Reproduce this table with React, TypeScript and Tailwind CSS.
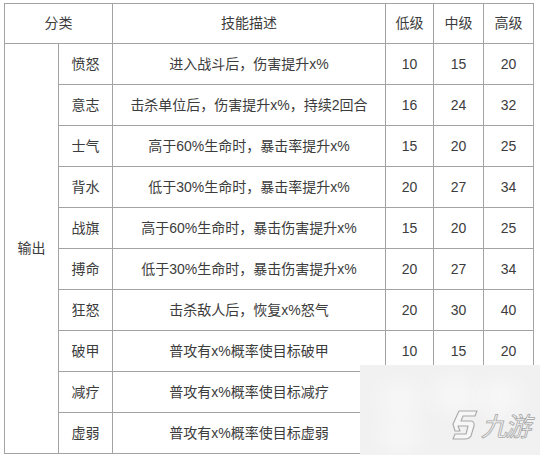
const rows = [
  { name: '愤怒', desc: '进入战斗后，伤害提升x%', v: ['10', '15', '20'] },
  { name: '意志', desc: '击杀单位后，伤害提升x%，持续2回合', v: ['16', '24', '32'] },
  { name: '士气', desc: '高于60%生命时，暴击率提升x%', v: ['15', '20', '25'] },
  { name: '背水', desc: '低于30%生命时，暴击率提升x%', v: ['20', '27', '34'] },
  { name: '战旗', desc: '高于60%生命时，暴击伤害提升x%', v: ['15', '20', '25'] },
  { name: '搏命', desc: '低于30%生命时，暴击伤害提升x%', v: ['20', '27', '34'] },
  { name: '狂怒', desc: '击杀敌人后，恢复x%怒气', v: ['20', '30', '40'] },
  { name: '破甲', desc: '普攻有x%概率使目标破甲', v: ['10', '15', '20'] },
  { name: '减疗', desc: '普攻有x%概率使目标减疗', v: ['', '', ''] },
  { name: '虚弱', desc: '普攻有x%概率使目标虚弱', v: ['', '', ''] },
];

const cell = 'border border-[#a3a3a3] text-center align-middle p-0';

function Watermark() {
  return (
    <div className="absolute left-[360px] top-[365px] w-[180px] h-[90px] bg-[#f1f1f1] overflow-hidden">
      <div className="absolute left-[20px] top-[20px] w-[40px] h-[30px] rounded-full bg-white/60 blur-md" />
      <div className="absolute left-[75px] top-[15px] w-[40px] h-[30px] rounded-full bg-white/60 blur-md" />
      <div className="absolute left-[120px] top-[18px] w-[40px] h-[30px] rounded-full bg-white/60 blur-md" />
      <div className="absolute left-[20px] top-[55px] w-[40px] h-[30px] rounded-full bg-white/60 blur-md" />
      <div className="absolute left-[89px] top-[44px] flex items-center gap-[2px]">
        <svg width="30" height="32" viewBox="0 0 30 32" fill="#f7f7f7" stroke="#a8a8a8" strokeWidth="1.1" strokeLinejoin="round">
          <path d="M10 2 L28 2 L26 7 L14 7 L12 12 L21 12 Q26 12 25 17 L22 27 Q20 30 16 30 L4 30 L6 25 L17 25 L19 17 L9 17 L11 22 L6 22 L4 15 Z" />
        </svg>
        <span
          className="text-[26px] leading-none italic text-[#f7f7f7] tracking-[-2px]"
          style={{ WebkitTextStroke: '0.8px #a8a8a8', fontFamily: '"Noto Sans CJK SC", sans-serif' }}
        >
          九游
        </span>
      </div>
    </div>
  );
}

export default function App() {
  return (
    <div
      className="relative w-[540px] h-[455px] bg-white overflow-hidden text-[14px] text-[#3c3c3c]"
      style={{ fontFamily: '"Liberation Sans", "Noto Sans CJK SC", sans-serif' }}
    >
      <div className="pl-[4px] pt-[3px]">
        <table className="border-collapse table-fixed w-[529px]">
          <colgroup>
            <col className="w-[54px]" />
            <col className="w-[54px]" />
            <col className="w-[273px]" />
            <col className="w-[48px]" />
            <col className="w-[50px]" />
            <col className="w-[50px]" />
          </colgroup>
          <tbody>
            <tr className="h-[40px]">
              <td className={cell} colSpan={2}>分类</td>
              <td className={cell}>技能描述</td>
              <td className={cell}>低级</td>
              <td className={cell}>中级</td>
              <td className={cell}>高级</td>
            </tr>
            {rows.map((r, i) => (
              <tr key={r.name} className="h-[41px]">
                {i === 0 && (
                  <td className={cell} rowSpan={rows.length}>输出</td>
                )}
                <td className={cell}>{r.name}</td>
                <td className={cell}>{r.desc}</td>
                <td className={cell}>{r.v[0]}</td>
                <td className={cell}>{r.v[1]}</td>
                <td className={cell}>{r.v[2]}</td>
              </tr>
            ))}
          </tbody>
        </table>
      </div>
      <Watermark />
    </div>
  );
}
